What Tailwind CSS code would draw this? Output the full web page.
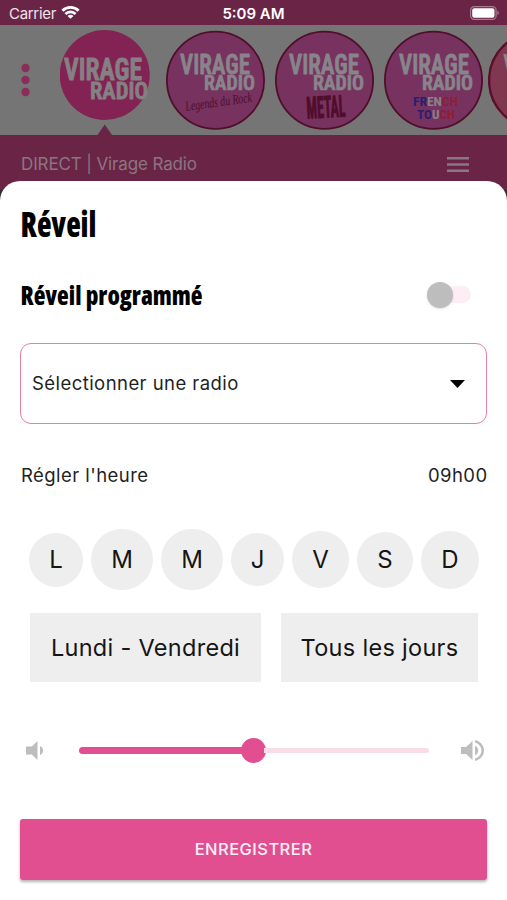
<!DOCTYPE html>
<html lang="fr">
<head>
  <meta charset="UTF-8">
  <meta name="viewport" content="width=device-width, initial-scale=1.0">
  <title>Virage Radio - Réveil</title>
  <script src="https://cdn.jsdelivr.net/npm/@tailwindcss/browser@4"></script>
  <style>
    body { font-family: Inter, "Liberation Sans", sans-serif; }
    .logo { font-family: Roboto, sans-serif; font-weight: 600; font-stretch: 75%; stroke-linejoin: round; }
    .title { font-family: "Open Sans", Roboto, sans-serif; font-weight: 800; font-stretch: 75%; }
  </style>
</head>
<body class="bg-[#303033] w-[507px] h-[900px] overflow-hidden">
  <!-- Barre d'état -->
  <div class="h-[25px] bg-[#6a2546] text-white grid grid-cols-3 items-center pt-[3px] px-[9px] text-[15px]">
    <div class="flex items-center gap-[5px] text-[#eee3e9]">
      <span class="tracking-[-0.3px]">Carrier</span>
      <svg class="w-[19px] h-[15px] mt-[-3px]" viewBox="0 0 20 15" fill="none" stroke="#fff" stroke-width="3">
        <path d="M1.5 5.6a12 12 0 0 1 17 0M4.700 9a7.500 7.500 0 0 1 10.600 0"/>
        <path d="M10 14.200 6.900 11.300a4.400 4.400 0 0 1 6.200 0z" fill="#fff" stroke="none"/>
      </svg>
    </div>
    <div class="text-center font-semibold whitespace-nowrap">5:09 AM</div>
    <svg class="w-[30px] h-[14px] justify-self-end mt-[-2px] mr-[-2px]" viewBox="0 0 30 14">
      <rect x="0.6" y="0.6" width="25.5" height="12.8" rx="3.6" fill="none" stroke="#a77c90" stroke-width="1.2"/>
      <rect x="2.2" y="2.2" width="22.3" height="9.6" rx="2" fill="#fff"/>
      <path d="M27.4 4.8a2.4 2.4 0 0 1 0 4.4z" fill="#a77c90"/>
    </svg>
  </div>

  <!-- Radios -->
  <div class="h-[110px] bg-[#757575] flex items-start pl-[21px] overflow-hidden">
    <svg class="w-[9px] h-[34px] mt-[38px] mr-[30px] shrink-0" viewBox="0 0 9 34" fill="#8b2c5b">
      <circle cx="4.5" cy="5" r="4.2"/><circle cx="4.5" cy="17" r="4.2"/><circle cx="4.5" cy="29" r="4.2"/>
    </svg>
    <svg class="logo w-[90px] h-[110px] mr-[16px] shrink-0" viewBox="0 0 90 110">
      <circle cx="44.7" cy="50" r="45" fill="#832353"/>
      <text x="4" y="54.5" font-size="32" fill="#858083" stroke="#858083" stroke-width="1" textLength="78" lengthAdjust="spacingAndGlyphs">VIRAGE</text>
      <text x="30" y="73.5" font-size="23" fill="#858083" stroke="#858083" stroke-width="0.8" textLength="58" lengthAdjust="spacingAndGlyphs">RADIO</text>
      <path d="M37.5 110 44.7 99.5 52 110z" fill="#6a2546"/>
    </svg>
    <svg class="logo w-[99px] h-[110px] mr-[10px] shrink-0" viewBox="0 0 99 110">
      <circle cx="49.5" cy="55.3" r="48.6" fill="#773260" stroke="#4f0f29" stroke-width="1.8"/>
      <text x="14" y="49" font-size="28.500" fill="#88858a" stroke="#88858a" stroke-width="0.8" textLength="70" lengthAdjust="spacingAndGlyphs">VIRAGE</text>
      <text x="38" y="64.800" font-size="19.500" fill="#88858a" stroke="#88858a" stroke-width="0.7" textLength="51" lengthAdjust="spacingAndGlyphs">RADIO</text>
      <text x="20" y="86" transform="rotate(-8 20 86)" font-family="Liberation Serif" font-style="italic" font-weight="400" font-size="14" fill="#4d0e2e" textLength="67" lengthAdjust="spacingAndGlyphs">Legends du Rock</text>
    </svg>
    <svg class="logo w-[99px] h-[110px] mr-[10px] shrink-0" viewBox="0 0 99 110">
      <circle cx="49.5" cy="55.3" r="48.6" fill="#773260" stroke="#4f0f29" stroke-width="1.8"/>
      <text x="14" y="49" font-size="28.5" fill="#88858a" stroke="#88858a" stroke-width="0.8" textLength="70" lengthAdjust="spacingAndGlyphs">VIRAGE</text>
      <text x="38" y="64.8" font-size="19.5" fill="#88858a" stroke="#88858a" stroke-width="0.7" textLength="51" lengthAdjust="spacingAndGlyphs">RADIO</text>
      <text x="32" y="93.5" transform="rotate(-3 32 93)" font-size="30" font-weight="700" fill="#500d2c" stroke="#500d2c" stroke-width="1" textLength="39" lengthAdjust="spacingAndGlyphs">METAL</text>
    </svg>
    <svg class="logo w-[99px] h-[110px] mr-[5px] shrink-0" viewBox="0 0 99 110">
      <circle cx="49.5" cy="55.3" r="48.6" fill="#773260" stroke="#4f0f29" stroke-width="1.8"/>
      <text x="15" y="49" font-size="28.5" fill="#88858a" stroke="#88858a" stroke-width="0.8" textLength="70" lengthAdjust="spacingAndGlyphs">VIRAGE</text>
      <text x="38" y="64.8" font-size="19.5" fill="#88858a" stroke="#88858a" stroke-width="0.7" textLength="51" lengthAdjust="spacingAndGlyphs">RADIO</text>
      <text x="29" y="80.5" font-size="13.5" font-weight="700" textLength="45" lengthAdjust="spacingAndGlyphs"><tspan fill="#272070">FR</tspan><tspan fill="#89828a">EN</tspan><tspan fill="#921c38">CH</tspan></text>
      <text x="33" y="94" font-size="13.5" font-weight="700" textLength="38" lengthAdjust="spacingAndGlyphs"><tspan fill="#272070">TO</tspan><tspan fill="#89828a">U</tspan><tspan fill="#921c38">CH</tspan></text>
    </svg>
    <svg class="logo w-[99px] h-[110px] shrink-0" viewBox="0 0 99 110">
      <circle cx="49.5" cy="55.3" r="48.4" fill="#803850" stroke="#5b0d2a" stroke-width="2.4"/>
      <text x="15" y="49" font-size="28.5" fill="#88858a" textLength="70" lengthAdjust="spacingAndGlyphs">VIRAGE</text>
    </svg>
  </div>

  <!-- Direct -->
  <div class="h-[55px] bg-[#6a2546] flex items-center justify-between pl-[21px] pr-[38px] pt-[4px]">
    <span class="text-[17px] tracking-[-0.13px] text-[#8b7581]">DIRECT | Virage Radio</span>
    <svg class="w-[22px] h-[15px]" viewBox="0 0 22 15" fill="#877881">
      <path d="M0 0h22v2.500H0zM0 6.200h22v2.500H0zM0 12.400h22v2.500H0z"/>
    </svg>
  </div>

  <!-- Panneau du réveil -->
  <div class="relative mt-[-9px] h-[719px] bg-white rounded-t-[20px] px-5 flex flex-col text-[#1f1f1f]">
    <svg class="title w-[200px] h-[44px] mt-[22px]" viewBox="0 0 200 44">
      <text x="0.5" y="34" font-size="34.500" fill="#000" textLength="76" lengthAdjust="spacingAndGlyphs">Réveil</text>
    </svg>
    <div class="flex items-center justify-between h-[40px] mt-[29px] pr-4">
      <svg class="title w-[220px] h-[40px]" viewBox="0 0 220 40">
        <text x="0.5" y="29" font-size="27" fill="#000" textLength="182" lengthAdjust="spacingAndGlyphs">Réveil programmé</text>
      </svg>
      <div class="w-[38px] h-[17px] rounded-full bg-[#fdedf4] flex items-center mt-[-3px]">
        <div class="w-[26px] h-[26px] ml-[-6px] rounded-full bg-[#bdbdbd] shadow-sm shrink-0"></div>
      </div>
    </div>

    <div class="mt-[27px] h-[81px] border-[1.5px] border-[#e47fa8] rounded-[11px] pl-[11px] pr-[21px] flex items-center justify-between">
      <span class="text-[18.5px] tracking-[0.44px]">Sélectionner une radio</span>
      <svg class="w-[15px] h-[8px]" viewBox="0 0 15 8"><path d="M0 0h15L7.500 8z" fill="#000"/></svg>
    </div>

    <div class="mt-[37px] h-[30px] flex items-center justify-between pl-px text-[18.5px] tracking-[0.44px]">
      <span>Régler l'heure</span>
      <span class="mr-[-0.5px]">09h00</span>
    </div>

    <div class="mt-[38px] h-[61px] flex items-center pl-[9px] text-[24px] text-[#151515]">
      <div class="w-[54px] h-[54px] mr-[8px] rounded-full bg-[#eee] flex items-center justify-center">L</div>
      <div class="w-[62px] h-[61px] mr-[8px] rounded-full bg-[#eee] flex items-center justify-center">M</div>
      <div class="w-[62px] h-[61px] mr-[8px] rounded-full bg-[#eee] flex items-center justify-center">M</div>
      <div class="w-[53px] h-[53px] mr-[8px] rounded-full bg-[#eee] flex items-center justify-center">J</div>
      <div class="w-[57px] h-[57px] mr-[8px] rounded-full bg-[#eee] flex items-center justify-center">V</div>
      <div class="w-[56px] h-[56px] mr-[8px] rounded-full bg-[#eee] flex items-center justify-center">S</div>
      <div class="w-[58px] h-[58px] rounded-full bg-[#eee] flex items-center justify-center">D</div>
    </div>

    <div class="mt-[23px] h-[69px] flex gap-5 pl-[10px] text-[23.5px] tracking-[0.3px] text-[#151515] whitespace-nowrap">
      <div class="w-[231px] bg-[#eee] flex items-center justify-center">Lundi - Vendredi</div>
      <div class="w-[197px] bg-[#eee] flex items-center justify-center">Tous les jours</div>
    </div>

    <!-- Volume -->
    <div class="mt-[55px] h-[26px] flex items-center justify-between pl-[6px] pr-[3px]">
      <svg class="w-[18px] h-[19px]" viewBox="0 0 18 19" fill="#bdbdbd">
        <path d="M0 5.500h5.800L11.500 0v19L5.800 13.500H0zM14 5c4 1.500 4 7.500 0 9z"/>
      </svg>
      <div class="w-[350px] h-[26px] mr-[-2px] flex items-center">
        <div class="h-[7px] rounded-l-full bg-[#e14f91]" style="width: 47%"></div>
        <div class="w-[25px] h-[25px] mx-[-2px] rounded-full bg-[#e14f91] shrink-0"></div>
        <div class="h-[5px] flex-1 rounded-r-sm bg-[#f8dce7]"></div>
      </div>
      <svg class="w-[23px] h-[21px]" viewBox="3 3.230 18 17.540" preserveAspectRatio="none" fill="#bdbdbd">
        <path d="M3 9v6h4l5 5V4L7 9H3zm13.500 3c0-1.770-1.020-3.290-2.500-4.030v8.050c1.480-.73 2.500-2.250 2.500-4.020zM14 3.230v2.060c2.890.86 5 3.540 5 6.710s-2.110 5.850-5 6.710v2.060c4.010-.91 7-4.490 7-8.770s-2.990-7.860-7-8.770z"/>
      </svg>
    </div>

    <button class="mt-[56px] h-[61px] w-full rounded-[3px] bg-[#e14f91] text-[#fff0f8] text-[16.5px] tracking-[0.45px] font-medium shadow-[0_2px_3px_rgba(0,0,0,0.3)]">ENREGISTRER</button>
  </div>
</body>
</html>
